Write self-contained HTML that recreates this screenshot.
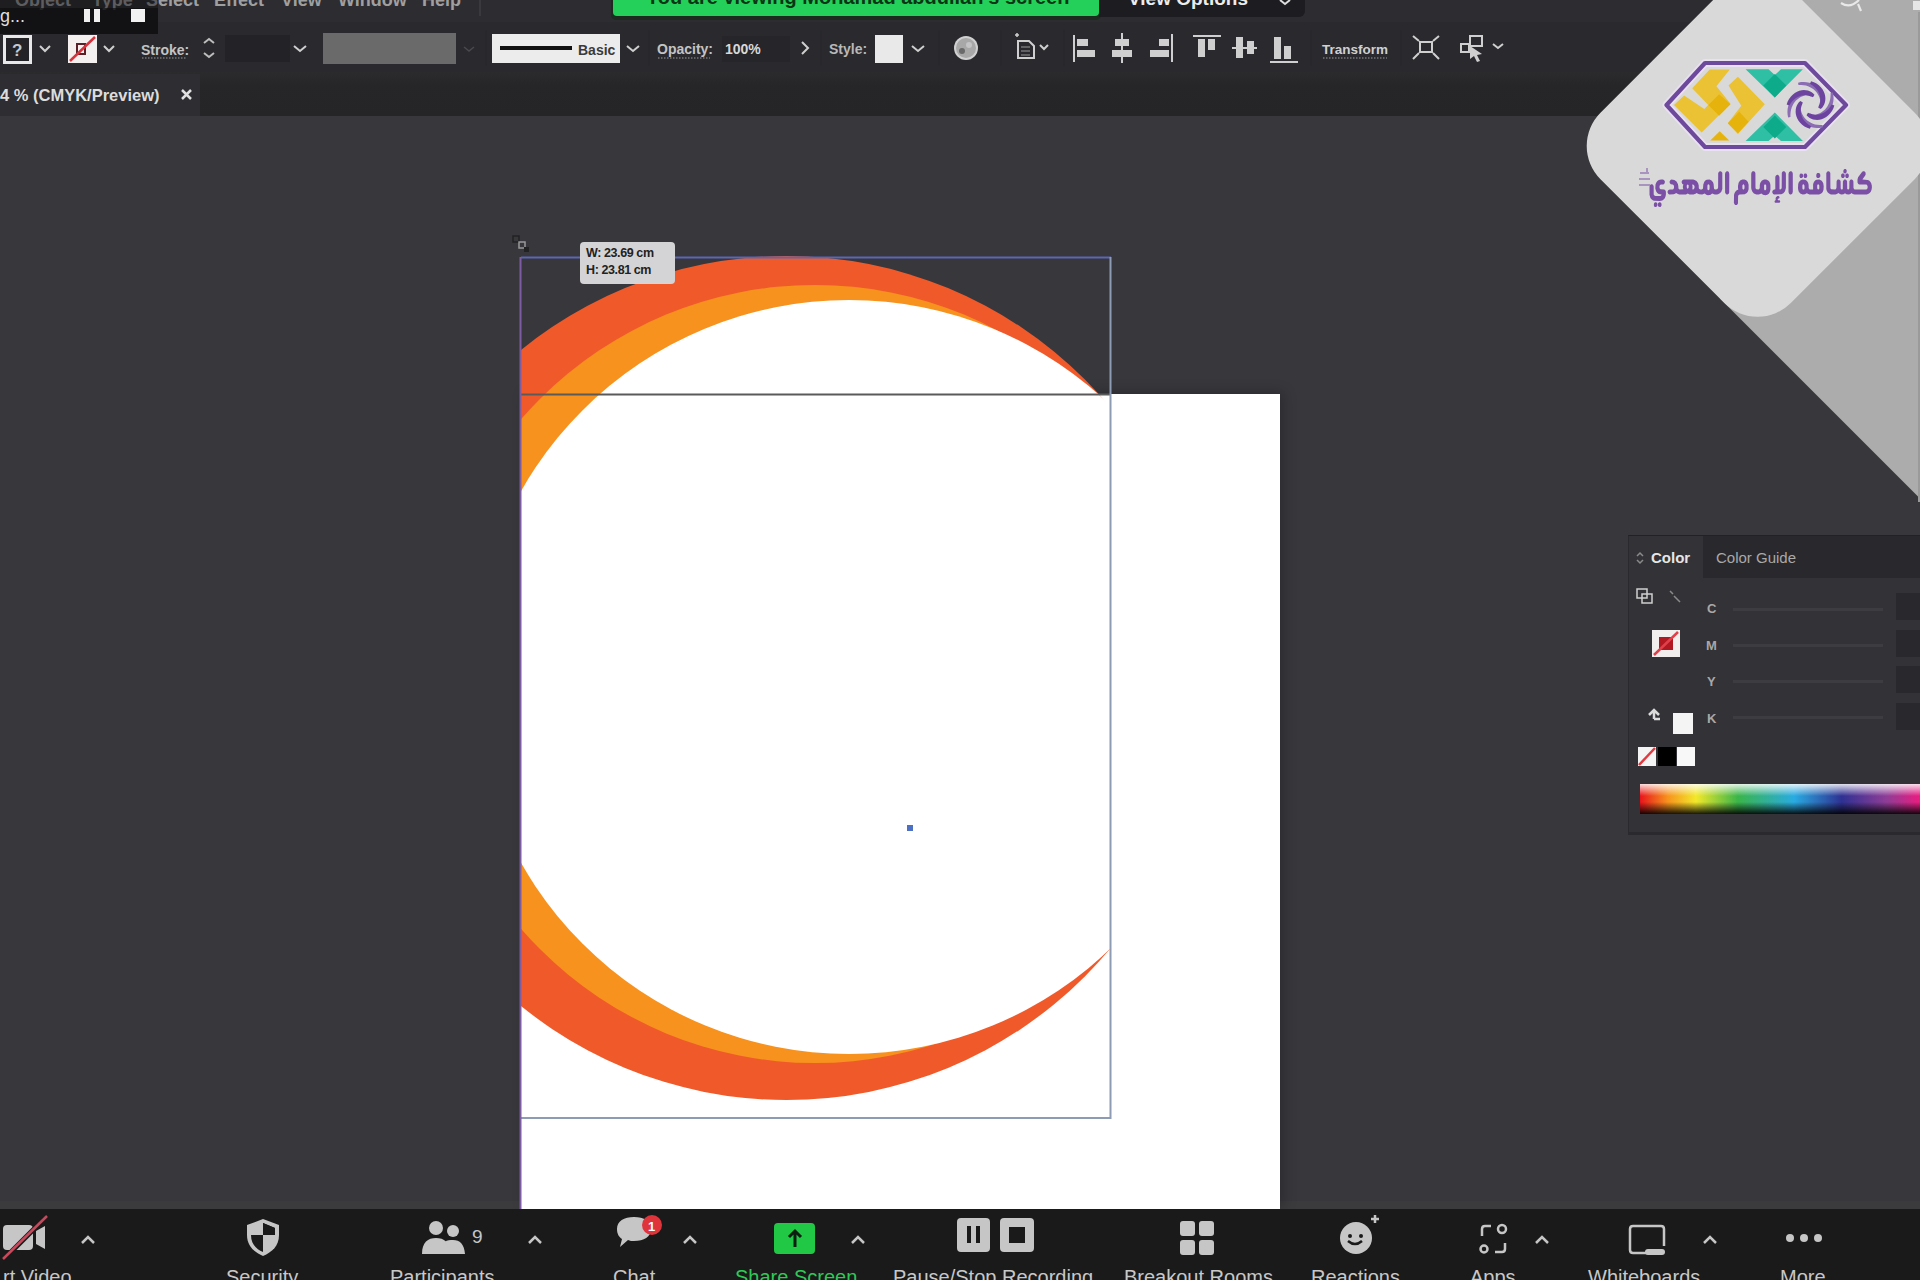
<!DOCTYPE html>
<html><head><meta charset="utf-8">
<style>
*{margin:0;padding:0;box-sizing:border-box}
html,body{width:1920px;height:1280px;overflow:hidden;background:#38373c;font-family:"Liberation Sans",sans-serif}
.a{position:absolute}
#menubar{left:0;top:0;width:1920px;height:22px;background:#2d2c31}
#toolbar{left:0;top:22px;width:1920px;height:50px;background:#2a292e}
#tabrow{left:0;top:72px;width:1920px;height:44px;background:linear-gradient(#2b2a2d,#262528 30%,#252527)}
#tab{left:0;top:74px;width:200px;height:42px;background:#2e2d31}
#canvas{left:0;top:116px;width:1920px;height:1093px;background:#38373c}
#zoombar{left:0;top:1209px;width:1920px;height:71px;background:#1a1a1a}
.menu{color:#b4b4b4;font-size:18px;top:-10px;font-weight:bold;opacity:.85}
.tt{color:#c8c8c8;font-size:14px}
.lbl{color:#c8c8c8;font-size:20px;top:1266px;white-space:nowrap}
</style></head><body>
<div id="menubar" class="a"></div>
<div id="toolbar" class="a"></div>
<div id="tabrow" class="a"></div>
<div id="tab" class="a"></div>
<div id="canvas" class="a"></div>

<!-- menu text (cut at top) -->
<div class="a menu" style="left:15px">Object</div>
<div class="a menu" style="left:92px">Type</div>
<div class="a menu" style="left:146px">Select</div>
<div class="a menu" style="left:214px">Effect</div>
<div class="a menu" style="left:281px">View</div>
<div class="a menu" style="left:338px">Window</div>
<div class="a menu" style="left:422px">Help</div>
<div class="a" style="left:479px;top:0;width:2px;height:16px;background:#3a393d"></div>

<!-- recording overlay -->
<div class="a" style="left:0;top:0;width:158px;height:8px;background:rgba(14,13,15,0.45)"></div><div class="a" style="left:0;top:8px;width:158px;height:26px;background:rgba(14,13,15,0.85)"></div>
<div class="a" style="left:0;top:6px;color:#dedede;font-size:18px">g...</div>
<div class="a" style="left:84px;top:9px;width:6px;height:13px;background:#f0f0f0"></div>
<div class="a" style="left:94px;top:9px;width:6px;height:13px;background:#f0f0f0"></div>
<div class="a" style="left:131px;top:9px;width:14px;height:13px;background:#f2f2f2"></div>

<!-- green banner -->
<div class="a" style="left:611px;top:0;width:490px;height:20px;background:#1c2a20;border-radius:0 0 5px 5px"></div>
<div class="a" style="left:613px;top:0;width:486px;height:16px;background:#25d05a;border-radius:0 0 4px 4px;overflow:hidden">
  <div class="a" style="left:33px;top:-14px;color:#0c3516;font-size:20px;font-weight:bold;white-space:nowrap">You are viewing Mohamad abdullah's screen</div>
</div>
<div class="a" style="left:1099px;top:0;width:206px;height:17px;background:#1d1c20;border-radius:0 0 6px 0;overflow:hidden">
  <div class="a" style="left:29px;top:-12px;color:#ececec;font-size:19px;font-weight:bold;white-space:nowrap">View Options</div>
  <svg class="a" style="left:178px;top:0" width="16" height="10"><path d="M3 0 L8 4 L13 0" stroke="#ddd" stroke-width="2" fill="none"/></svg>
</div>

<!-- toolbar -->
<svg class="a" style="left:0;top:22px" width="1920" height="50">
  <g fill="none" stroke="#cfcfcf" stroke-width="2">
    <!-- fill box -->
    
    <path d="M40 24 l5 5 l5 -5" />
    <path d="M104 24 l5 5 l5 -5" />
    <path d="M204 21 l5 -4 l5 4 M204 31 l5 4 l5 -4" stroke="#bdbdbd"/>
    <path d="M294 24 l6 5 l6 -5" />
    <path d="M627 24 l6 5 l6 -5" />
    <path d="M802 20 l6 6 l-6 6" />
    <path d="M912 24 l6 5 l6 -5" />
    <path d="M1040 23 l4 4 l4 -4" />
    <path d="M1493 22 l5 4 l5 -4" />
  </g>
    <rect x="4.5" y="14.5" width="26" height="26" fill="#232226" stroke="#e8e8e8" stroke-width="3"/><text x="12" y="34" fill="#c8c8c8" font-size="17" font-family="Liberation Sans" font-weight="bold">?</text>
  <!-- stroke box -->
  <rect x="68" y="13" width="29" height="28" fill="#f4f0f0"/>
  <path d="M77 22 h8 v10 h-8 z" fill="none" stroke="#5a2028" stroke-width="2"/>
  <line x1="70" y1="39" x2="95" y2="15" stroke="#d8323c" stroke-width="2.5"/>
  <text x="141" y="33" fill="#c4c4c4" font-size="14" font-family="Liberation Sans" font-weight="bold">Stroke:</text>
  <line x1="142" y1="36" x2="187" y2="36" stroke="#9a9a9a" stroke-width="1" stroke-dasharray="1.5 1.5"/>
  <rect x="225" y="13" width="65" height="27" fill="#232226"/>
  <rect x="323" y="11" width="133" height="31" fill="#6a6a6a"/>
  <rect x="458" y="11" width="22" height="31" fill="#2a292e"/>
  <path d="M464 25 l5 4 l5 -4" stroke="#4a4a4e" stroke-width="1.5" fill="none"/>
  <!-- brush box -->
  <rect x="492" y="12" width="128" height="29" fill="#ececec"/>
  <rect x="500" y="24" width="72" height="4" fill="#111"/>
  <text x="578" y="33" fill="#3a3a3a" font-size="14" font-family="Liberation Sans" font-weight="bold">Basic</text>
  <text x="657" y="32" fill="#c4c4c4" font-size="14" font-family="Liberation Sans" font-weight="bold">Opacity:</text>
  <line x1="658" y1="36" x2="710" y2="36" stroke="#9a9a9a" stroke-width="1" stroke-dasharray="1.5 1.5"/>
  <rect x="722" y="14" width="68" height="26" fill="#262529"/>
  <text x="725" y="32" fill="#d8d8d8" font-size="14" font-family="Liberation Sans" font-weight="bold">100%</text>
  <text x="829" y="32" fill="#b8b8b8" font-size="14" font-family="Liberation Sans" font-weight="bold">Style:</text>
  <rect x="875" y="13" width="28" height="28" fill="#e9e9e9"/>
  <circle cx="966" cy="26" r="12" fill="#d0d0d0"/>
  <circle cx="966" cy="26" r="10" fill="#a8a8a8"/><circle cx="962" cy="29" r="3" fill="#6a6a6a"/><circle cx="969" cy="23" r="3" fill="#c4c4c4"/>
  <!-- doc icon -->
  <g fill="none" stroke="#cfcfcf" stroke-width="2">
    <path d="M1017 15 v-4 M1015 13 h4" stroke-width="1.5"/>
    <path d="M1018 19 h11 l5 5 v12 h-16 z"/>
    <path d="M1021 25 h9 M1021 29 h9 M1021 33 h9" stroke-width="1.2" stroke="#9a9a9a"/>
  </g>
  <!-- align icons -->
  <g fill="#cfcfcf">
    <rect x="1073" y="13" width="2" height="27"/><rect x="1077" y="17" width="11" height="7"/><rect x="1077" y="28" width="18" height="7"/>
    <rect x="1121" y="11" width="2" height="30"/><rect x="1115" y="17" width="14" height="7"/><rect x="1112" y="28" width="20" height="7"/>
    <rect x="1171" y="12" width="2" height="28"/><rect x="1159" y="17" width="10" height="7"/><rect x="1150" y="28" width="19" height="7"/>
    <rect x="1193" y="13" width="28" height="2"/><rect x="1198" y="17" width="7" height="18"/><rect x="1208" y="17" width="7" height="11"/>
    <rect x="1232" y="25" width="25" height="2"/><rect x="1236" y="15" width="7" height="21"/><rect x="1247" y="19" width="7" height="13"/>
    <rect x="1270" y="39" width="28" height="2"/><rect x="1274" y="15" width="7" height="22"/><rect x="1284" y="24" width="7" height="13"/>
  </g>
  <text x="1322" y="32" fill="#d0d0d0" font-size="13.5" font-family="Liberation Sans" font-weight="bold">Transform</text>
  <line x1="1323" y1="36" x2="1387" y2="36" stroke="#9a9a9a" stroke-width="1" stroke-dasharray="1.5 1.5"/>
  <g fill="none" stroke="#cfcfcf" stroke-width="2">
    <rect x="1420" y="20" width="12" height="10"/>
    <path d="M1413 14 l6 5 M1439 14 l-6 5 M1413 37 l6 -6 M1439 37 l-6 -6"/>
    <rect x="1470" y="14" width="12" height="10"/>
    <rect x="1461" y="22" width="8" height="8"/>
  </g>
  <path d="M1470 24 l12 8 l-5 1 l3 6 l-3 1 l-3 -6 l-4 3 z" fill="#cfcfcf"/>
  <!-- separators -->
  <g fill="#28272b">
    <rect x="485" y="8" width="2" height="36"/><rect x="648" y="8" width="2" height="36"/>
    <rect x="820" y="8" width="2" height="36"/><rect x="938" y="8" width="2" height="36"/><rect x="1000" y="8" width="2" height="36"/>
    <rect x="1063" y="8" width="2" height="36"/><rect x="1310" y="8" width="2" height="36"/><rect x="1400" y="8" width="2" height="36"/>
  </g>
</svg>

<!-- tab -->
<div class="a" style="left:0;top:86px;color:#dcdcdc;font-size:16.5px;font-weight:bold;white-space:nowrap">4 % (CMYK/Preview)</div>
<svg class="a" style="left:180px;top:88px" width="14" height="14"><path d="M2 2 L11 11 M11 2 L2 11" stroke="#e0e0e0" stroke-width="2.5"/></svg>

<div class="a" style="left:0;top:1201px;width:1920px;height:8px;background:#3b3a3d"></div>
<!-- artboard -->
<div class="a" style="left:521px;top:394px;width:759px;height:815px;background:#fff;box-shadow:4px -2px 12px rgba(0,0,0,.22)"></div>

<!-- artwork -->
<svg class="a" style="left:0;top:0" width="1920" height="1280">
  <defs><clipPath id="cl"><rect x="521" y="200" width="590" height="1000"/></clipPath></defs>
  <g clip-path="url(#cl)">
    <circle cx="786.5" cy="678" r="422" fill="#f05a2a"/>
    <circle cx="815" cy="674" r="389" fill="#f7921e"/>
    <circle cx="849" cy="677" r="377" fill="#ffffff"/>
  </g>
  <line x1="521" y1="394.5" x2="1110" y2="394.5" stroke="#5a5a5a" stroke-width="2"/>
  <line x1="521" y1="257.5" x2="1111" y2="257.5" stroke="#5b66b4" stroke-width="2"/>
  <line x1="1110.5" y1="257" x2="1110.5" y2="1119" stroke="#8d9bb5" stroke-width="2"/>
  <line x1="521" y1="1118" x2="1111" y2="1118" stroke="#8d9bb5" stroke-width="2"/>
  <line x1="520.5" y1="257" x2="520.5" y2="1209" stroke="#7d5ca3" stroke-width="2"/>
  <rect x="907" y="825" width="6" height="6" fill="#4d6fc4"/>
</svg>

<!-- tooltip -->
<div class="a" style="left:580px;top:242px;width:95px;height:42px;background:#d4d4d6;border-radius:4px"></div>
<div class="a" style="left:586px;top:245px;color:#222;font-size:12.5px;font-weight:bold;line-height:17px;white-space:nowrap;letter-spacing:-0.4px">W: 23.69 cm<br>H: 23.81 cm</div>
<svg class="a" style="left:508px;top:232px" width="30" height="30">
  <rect x="5" y="4" width="6" height="6" fill="none" stroke="#222" stroke-width="1.5"/>
  <rect x="11" y="10" width="6" height="6" fill="none" stroke="#999" stroke-width="1.5"/>
  <rect x="16" y="15" width="5" height="5" fill="#222"/>
</svg>

<!-- color panel -->
<div class="a" style="left:1628px;top:535px;width:292px;height:300px;background:#333237;border-top:1px solid #222126;border-left:1px solid #2a292d;border-bottom:3px solid #2a292d"></div>
<div class="a" style="left:1703px;top:536px;width:217px;height:42px;background:#29282c"></div>
<svg class="a" style="left:1636px;top:551px" width="8" height="14"><path d="M1 5 l3 -3 l3 3 M1 9 l3 3 l3 -3" stroke="#8a8a8a" stroke-width="1.5" fill="none"/></svg>
<div class="a" style="left:1651px;top:549px;color:#e6e6e6;font-size:15px;font-weight:bold">Color</div>
<div class="a" style="left:1716px;top:549px;color:#a9a9a9;font-size:15px">Color Guide</div>
<svg class="a" style="left:1628px;top:578px" width="292" height="257">
  <g fill="none" stroke="#cfcfcf" stroke-width="1.5">
    <rect x="9" y="11" width="10" height="9"/><rect x="14" y="16" width="10" height="9"/>
    <path d="M42 13 l3 3 M46 18 l6 6" stroke="#8a8a8a"/>
  </g>
  <rect x="24" y="52" width="28" height="27" fill="#f2eeee"/>
  <rect x="31" y="59" width="14" height="13" fill="#b01822"/>
  <line x1="26" y1="77" x2="50" y2="54" stroke="#e0404a" stroke-width="2.5"/>
  <g fill="#a8a8a8" font-family="Liberation Sans" font-size="13" font-weight="bold">
    <text x="79" y="35">C</text><text x="78" y="72">M</text><text x="79" y="108">Y</text><text x="79" y="145">K</text>
  </g>
  <g fill="#3d3c41">
    <rect x="105" y="30" width="150" height="3"/><rect x="105" y="66" width="150" height="3"/>
    <rect x="105" y="102" width="150" height="3"/><rect x="105" y="138" width="150" height="3"/>
  </g>
  <g fill="#29282c">
    <rect x="268" y="15" width="24" height="27"/><rect x="268" y="52" width="24" height="27"/>
    <rect x="268" y="88" width="24" height="27"/><rect x="268" y="125" width="24" height="27"/>
  </g>
  <path d="M26 141 v-9 M21 137 l5 -5 l5 5 M26 141 h6" stroke="#dcdcdc" stroke-width="2.5" fill="none"/>
  <rect x="45" y="135" width="20" height="21" fill="#f4f4f4"/>
  <rect x="10" y="169" width="18" height="19" fill="#f4f4f4"/>
  <line x1="11" y1="187" x2="27" y2="170" stroke="#e03a40" stroke-width="2.5"/>
  <rect x="30" y="169" width="18" height="19" fill="#000"/>
  <rect x="49" y="169" width="18" height="19" fill="#f8f8f8"/>
  <defs>
    <linearGradient id="spec" x1="0" x2="1" y1="0" y2="0">
      <stop offset="0" stop-color="#e8141c"/><stop offset="0.1" stop-color="#f7941d"/><stop offset="0.2" stop-color="#f2e82a"/>
      <stop offset="0.35" stop-color="#3ab54a"/><stop offset="0.55" stop-color="#29abe2"/><stop offset="0.72" stop-color="#2e3192"/>
      <stop offset="0.88" stop-color="#8e3d97"/><stop offset="1" stop-color="#ec1c80"/>
    </linearGradient>
    <linearGradient id="specv" x1="0" x2="0" y1="0" y2="1">
      <stop offset="0" stop-color="#fff" stop-opacity="0.85"/><stop offset="0.4" stop-color="#fff" stop-opacity="0"/>
      <stop offset="0.6" stop-color="#000" stop-opacity="0"/><stop offset="1" stop-color="#000" stop-opacity="0.9"/>
    </linearGradient>
  </defs>
  <rect x="12" y="206" width="280" height="30" fill="url(#spec)"/>
  <rect x="12" y="206" width="280" height="30" fill="url(#specv)"/>
</svg>

<!-- logo overlay -->
<svg class="a" style="left:0;top:0" width="1920" height="1280">
  <polygon points="1713,0 1920,0 1920,498.5 1720,298.5 1757.6,146" fill="#acacac"/>
  <path d="M1841 3 q9 6 18 -3 M1858 4 l3 7" stroke="#e8e8e8" stroke-width="2.2" fill="none"/>
  <rect x="1913" y="1" width="7" height="9" fill="#e6e6e6"/><rect x="1918" y="12" width="2" height="490" fill="#9a9a9a"/>
  <g transform="translate(1757.6 145.9) rotate(45)">
    <rect x="-134.6" y="-134.6" width="269.2" height="269.2" rx="47" fill="#d9d9d9"/>
  </g>
</svg>

<!-- logo -->
<svg class="a" style="left:0;top:0" width="1920" height="300">
  <polygon points="1666.5,105 1705,63 1805,63 1846,105 1805,147 1705,147" fill="none" stroke="#e9e0f0" stroke-width="8" stroke-linejoin="round"/>
  <polygon points="1666.5,105 1705,63 1805,63 1846,105 1805,147 1705,147" fill="none" stroke="#6d4a9c" stroke-width="4.2" stroke-linejoin="round"/>
  <g fill="#ebc233">
    <polygon points="1709.7,69.4 1729.8,69.4 1716.4,86.2 1730.5,103.7 1701.6,132.6 1674.0,105.0 1684.1,95.6 1704.3,109.0 1708.3,105.0 1692.2,88.2"/>
    <polygon points="1728.5,85.5 1737.9,76.8 1764.8,104.3 1737.9,133.9 1727.8,123.2 1741.3,105.7"/>
  </g>
  <g fill="#e6b30c">
    <polygon points="1708.3,105.0 1719.1,94.3 1730.5,104.3 1719.1,115.8"/>
    <polygon points="1727.8,123.2 1739.2,111.7 1748.6,121.8 1737.9,133.2"/>
    <polygon points="1710.3,140.6 1719.7,131.2 1729.2,140.6"/>
  </g>
  <g fill="#2ebfa4">
    <polygon points="1745.6,69.3 1768.5,69.3 1774.8,75.0 1781.0,69.3 1802.9,69.3 1774.8,97.4"/>
    <polygon points="1745.6,141.1 1768.5,141.1 1774.8,135.4 1781.0,141.1 1802.9,141.1 1774.8,112.5"/>
  </g>
  <g fill="#0eab8b">
    <polygon points="1763.3,85.4 1774.8,74.0 1786.3,85.4 1774.8,97.4"/>
    <polygon points="1763.3,127.1 1774.8,115.6 1786.3,127.1 1774.8,138.5"/>
  </g>
  <path d="M1798.08 109.35 L1798.03 110.66 L1798.09 112.21 L1798.34 113.88 L1798.80 115.63 L1799.50 117.42 L1800.47 119.19 L1801.70 120.92 L1803.20 122.56 L1804.97 124.06 L1807.00 125.38 L1809.26 126.48 L1811.73 127.32 L1814.37 127.86 L1817.15 128.07 L1820.02 127.92 L1822.93 127.37 L1822.57 125.06 L1819.90 125.09 L1817.39 124.86 L1815.04 124.39 L1812.86 123.72 L1810.88 122.87 L1809.10 121.86 L1807.51 120.74 L1806.12 119.53 L1804.91 118.26 L1803.89 116.94 L1803.03 115.60 L1802.32 114.25 L1801.73 112.91 L1801.25 111.58 L1800.83 110.26 L1800.37 108.86ZM1814.85 117.42 L1816.16 117.47 L1817.71 117.41 L1819.38 117.16 L1821.13 116.70 L1822.92 116.00 L1824.69 115.03 L1826.42 113.80 L1828.06 112.30 L1829.56 110.53 L1830.88 108.50 L1831.98 106.24 L1832.82 103.77 L1833.36 101.13 L1833.57 98.35 L1833.42 95.48 L1832.87 92.57 L1830.56 92.93 L1830.59 95.60 L1830.36 98.11 L1829.89 100.46 L1829.22 102.64 L1828.37 104.62 L1827.36 106.40 L1826.24 107.99 L1825.03 109.38 L1823.76 110.59 L1822.44 111.61 L1821.10 112.47 L1819.75 113.18 L1818.41 113.77 L1817.08 114.25 L1815.76 114.67 L1814.36 115.13ZM1822.92 100.65 L1822.97 99.34 L1822.91 97.79 L1822.66 96.12 L1822.20 94.37 L1821.50 92.58 L1820.53 90.81 L1819.30 89.08 L1817.80 87.44 L1816.03 85.94 L1814.00 84.62 L1811.74 83.52 L1809.27 82.68 L1806.63 82.14 L1803.85 81.93 L1800.98 82.08 L1798.07 82.63 L1798.43 84.94 L1801.10 84.91 L1803.61 85.14 L1805.96 85.61 L1808.14 86.28 L1810.12 87.13 L1811.90 88.14 L1813.49 89.26 L1814.88 90.47 L1816.09 91.74 L1817.11 93.06 L1817.97 94.40 L1818.68 95.75 L1819.27 97.09 L1819.75 98.42 L1820.17 99.74 L1820.63 101.14ZM1806.15 92.58 L1804.84 92.53 L1803.29 92.59 L1801.62 92.84 L1799.87 93.30 L1798.08 94.00 L1796.31 94.97 L1794.58 96.20 L1792.94 97.70 L1791.44 99.47 L1790.12 101.50 L1789.02 103.76 L1788.18 106.23 L1787.64 108.87 L1787.43 111.65 L1787.58 114.52 L1788.13 117.43 L1790.44 117.07 L1790.41 114.40 L1790.64 111.89 L1791.11 109.54 L1791.78 107.36 L1792.63 105.38 L1793.64 103.60 L1794.76 102.01 L1795.97 100.62 L1797.24 99.41 L1798.56 98.39 L1799.90 97.53 L1801.25 96.82 L1802.59 96.23 L1803.92 95.75 L1805.24 95.33 L1806.64 94.87Z" fill="#8b6db4"/><path d="M1800.32 101.04 L1799.46 101.77 L1798.48 102.85 L1797.55 104.19 L1796.74 105.76 L1796.12 107.55 L1795.74 109.53 L1795.62 111.66 L1795.83 113.89 L1796.37 116.18 L1797.27 118.48 L1798.53 120.71 L1800.16 122.83 L1802.15 124.76 L1804.47 126.45 L1807.09 127.83 L1809.96 128.84 L1811.04 126.16 L1808.78 124.76 L1806.82 123.24 L1805.17 121.60 L1803.80 119.89 L1802.72 118.15 L1801.90 116.42 L1801.32 114.71 L1800.96 113.06 L1800.79 111.49 L1800.79 109.99 L1800.92 108.59 L1801.17 107.28 L1801.50 106.05 L1801.90 104.89 L1802.35 103.75 L1802.83 102.46ZM1806.54 115.18 L1807.27 116.04 L1808.35 117.02 L1809.69 117.95 L1811.26 118.76 L1813.05 119.38 L1815.03 119.76 L1817.16 119.88 L1819.39 119.67 L1821.68 119.13 L1823.98 118.23 L1826.21 116.97 L1828.33 115.34 L1830.26 113.35 L1831.95 111.03 L1833.33 108.41 L1834.34 105.54 L1831.66 104.46 L1830.26 106.72 L1828.74 108.68 L1827.10 110.33 L1825.39 111.70 L1823.65 112.78 L1821.92 113.60 L1820.21 114.18 L1818.56 114.54 L1816.99 114.71 L1815.49 114.71 L1814.09 114.58 L1812.78 114.33 L1811.55 114.00 L1810.39 113.60 L1809.25 113.15 L1807.96 112.67ZM1820.68 108.96 L1821.54 108.23 L1822.52 107.15 L1823.45 105.81 L1824.26 104.24 L1824.88 102.45 L1825.26 100.47 L1825.38 98.34 L1825.17 96.11 L1824.63 93.82 L1823.73 91.52 L1822.47 89.29 L1820.84 87.17 L1818.85 85.24 L1816.53 83.55 L1813.91 82.17 L1811.04 81.16 L1809.96 83.84 L1812.22 85.24 L1814.18 86.76 L1815.83 88.40 L1817.20 90.11 L1818.28 91.85 L1819.10 93.58 L1819.68 95.29 L1820.04 96.94 L1820.21 98.51 L1820.21 100.01 L1820.08 101.41 L1819.83 102.72 L1819.50 103.95 L1819.10 105.11 L1818.65 106.25 L1818.17 107.54ZM1814.46 94.82 L1813.73 93.96 L1812.65 92.98 L1811.31 92.05 L1809.74 91.24 L1807.95 90.62 L1805.97 90.24 L1803.84 90.12 L1801.61 90.33 L1799.32 90.87 L1797.02 91.77 L1794.79 93.03 L1792.67 94.66 L1790.74 96.65 L1789.05 98.97 L1787.67 101.59 L1786.66 104.46 L1789.34 105.54 L1790.74 103.28 L1792.26 101.32 L1793.90 99.67 L1795.61 98.30 L1797.35 97.22 L1799.08 96.40 L1800.79 95.82 L1802.44 95.46 L1804.01 95.29 L1805.51 95.29 L1806.91 95.42 L1808.22 95.67 L1809.45 96.00 L1810.61 96.40 L1811.75 96.85 L1813.04 97.33Z" fill="#6c44a0"/>
  <path d="M1659.2 202.3 1658.1 203.3 1657.9 203.8 1657.9 205.5 1658.6 206.7 1660.3 207.0 1660.8 206.7 1661.5 205.5 1661.5 203.8 1660.7 202.5ZM1655.2 202.3 1654.5 202.7 1654.0 203.4 1653.8 205.3 1654.3 206.5 1654.7 206.9 1656.2 207.0 1657.1 206.1 1657.4 205.3 1657.4 204.0 1657.0 203.0 1656.5 202.5ZM1779.0 196.2 1778.4 196.0 1777.4 196.1 1776.0 197.2 1775.6 198.3 1775.7 200.1 1774.6 200.9 1774.6 201.9 1774.9 202.4 1775.4 202.7 1779.3 202.7 1780.0 202.2 1780.2 201.4 1779.9 200.6 1779.3 200.2 1778.1 200.2 1777.7 199.7 1777.9 198.7 1778.9 198.5 1779.4 198.0 1779.5 197.0ZM1664.2 180.2 1663.0 179.6 1661.1 179.6 1658.8 180.1 1657.4 181.1 1656.3 182.4 1655.5 184.4 1655.3 188.4 1656.2 191.4 1657.3 192.9 1658.7 193.9 1661.5 194.4 1661.5 195.0 1660.5 195.9 1655.4 196.0 1654.4 195.6 1653.9 195.0 1653.7 194.3 1653.7 186.5 1653.5 185.8 1652.9 184.8 1652.1 184.3 1651.1 184.3 1650.1 185.0 1649.5 186.5 1649.5 194.8 1650.4 197.9 1651.5 199.3 1653.1 200.4 1654.4 200.8 1659.7 200.9 1662.3 200.4 1663.9 199.3 1664.6 198.5 1665.5 196.6 1665.9 194.6 1665.9 191.8 1665.6 190.8 1665.2 190.2 1664.3 189.6 1660.5 189.3 1659.8 188.6 1659.5 188.0 1659.5 186.1 1660.1 185.0 1661.0 184.5 1663.4 184.4 1664.7 183.3 1664.9 181.5ZM1798.2 184.0 1798.0 188.0 1798.2 189.8 1798.7 191.4 1800.2 193.4 1802.7 194.5 1805.0 194.3 1806.7 193.2 1809.5 194.4 1819.0 194.4 1820.7 193.8 1821.9 192.9 1822.8 191.7 1823.5 189.7 1823.7 186.3 1823.2 183.1 1821.7 180.7 1819.3 179.5 1816.5 179.7 1815.4 180.3 1814.1 181.7 1813.4 183.2 1813.1 184.5 1813.1 189.5 1810.0 189.5 1809.4 189.2 1808.7 187.9 1808.6 184.7 1808.1 182.7 1807.0 181.0 1805.2 179.7 1802.4 179.5 1800.6 180.2 1798.9 182.1ZM1818.0 184.3 1818.7 184.4 1819.3 185.4 1819.3 188.5 1818.7 189.5 1817.7 189.3 1817.2 188.2 1817.2 185.6 1817.5 184.8ZM1803.2 184.3 1803.9 184.4 1804.5 185.8 1804.5 188.2 1804.2 189.2 1803.8 189.6 1802.9 189.5 1802.4 188.6 1802.4 185.4 1802.6 184.8ZM1746.3 180.3 1744.4 179.5 1742.4 179.5 1740.1 180.6 1738.6 182.7 1738.0 185.9 1738.0 187.9 1738.3 189.6 1736.4 190.5 1735.1 191.9 1734.4 193.4 1734.0 195.0 1733.9 202.9 1734.4 204.1 1735.1 204.9 1735.8 205.1 1736.9 204.9 1737.7 204.0 1738.0 203.3 1738.1 196.1 1738.6 194.9 1739.6 194.4 1744.7 194.3 1746.8 193.0 1747.9 191.6 1748.6 189.2 1748.6 184.7 1747.8 182.1ZM1743.2 184.3 1743.9 184.4 1744.5 185.8 1744.5 188.1 1744.2 189.1 1743.8 189.5 1743.0 189.5 1742.4 188.5 1742.4 185.4ZM1846.6 173.4 1845.5 174.4 1845.3 174.9 1845.3 176.6 1846.0 177.9 1847.6 178.1 1848.2 177.8 1848.8 176.6 1848.8 175.0 1848.5 174.3 1847.8 173.6ZM1842.2 173.6 1841.4 174.3 1841.1 175.0 1841.2 176.9 1842.1 178.0 1843.6 178.1 1844.7 176.8 1844.7 174.8 1843.7 173.6ZM1805.0 173.4 1804.3 173.8 1803.7 174.8 1803.6 176.4 1804.4 177.9 1806.0 178.1 1806.7 177.6 1807.2 176.6 1807.2 175.0 1806.5 173.8 1805.8 173.4ZM1800.8 173.4 1800.3 173.7 1799.6 174.7 1799.5 176.6 1800.2 177.9 1802.0 178.1 1803.1 176.8 1803.1 174.8 1802.3 173.7ZM1817.7 172.9 1817.0 173.3 1816.4 174.2 1816.2 176.3 1816.7 177.4 1817.4 178.0 1818.8 178.1 1819.6 177.6 1820.3 176.4 1820.3 174.7 1819.5 173.3 1818.8 172.9ZM1826.3 172.9 1826.3 189.0 1826.7 190.5 1827.6 192.2 1828.7 193.3 1830.3 194.2 1831.4 194.4 1835.4 194.4 1836.8 194.0 1838.5 193.0 1839.8 194.0 1841.3 194.4 1843.5 194.2 1845.0 193.2 1846.5 194.2 1848.8 194.4 1850.4 193.9 1851.5 193.0 1852.8 193.9 1854.6 194.4 1866.7 194.4 1868.6 193.8 1869.9 192.8 1870.9 191.4 1871.6 189.6 1871.9 187.4 1871.8 185.4 1871.2 183.2 1870.3 181.7 1869.1 180.6 1867.6 179.9 1862.4 179.5 1865.2 175.5 1865.7 174.3 1865.5 172.5 1865.0 171.7 1864.2 171.2 1863.2 171.2 1862.2 171.8 1858.1 177.3 1857.5 179.4 1857.5 182.4 1858.3 184.0 1859.3 184.5 1866.3 184.5 1866.8 184.8 1867.6 186.0 1867.6 188.0 1867.4 188.6 1866.4 189.5 1854.8 189.5 1854.2 189.2 1853.5 188.0 1853.4 181.5 1853.1 180.6 1851.9 179.5 1850.8 179.5 1850.2 179.9 1849.4 181.2 1849.3 188.1 1849.1 189.0 1848.5 189.5 1847.9 189.5 1847.2 188.7 1847.1 181.6 1846.7 180.5 1845.6 179.5 1844.2 179.6 1843.1 181.0 1842.9 181.8 1842.8 188.9 1842.2 189.5 1841.4 189.5 1840.7 188.6 1840.6 181.5 1840.3 180.6 1839.1 179.5 1837.7 179.6 1836.9 180.5 1836.6 181.2 1836.5 187.6 1836.2 188.6 1835.7 189.2 1835.1 189.5 1831.4 189.3 1830.8 188.9 1830.4 187.7 1830.3 172.9 1829.6 171.7 1828.8 171.2 1827.3 171.5ZM1790.2 171.2 1789.0 172.2 1788.5 174.1 1788.5 191.6 1788.7 192.8 1789.3 193.9 1790.3 194.5 1791.0 194.5 1792.2 193.7 1792.8 191.8 1792.8 173.8 1792.5 172.6 1791.8 171.6 1791.1 171.2ZM1784.3 171.2 1783.0 171.3 1782.1 172.3 1781.8 173.1 1781.7 187.7 1781.5 188.5 1780.8 189.2 1780.2 189.5 1779.5 189.3 1779.5 177.4 1779.3 176.4 1778.5 175.2 1777.8 174.8 1776.6 174.9 1775.6 176.0 1775.3 177.0 1775.3 189.3 1773.6 189.7 1772.4 190.9 1772.3 192.6 1773.1 193.9 1774.2 194.4 1781.3 194.3 1783.4 193.3 1785.0 191.3 1785.9 188.1 1785.9 173.4 1785.3 172.0ZM1752.2 171.6 1751.6 172.3 1751.2 173.9 1751.2 187.4 1751.4 189.2 1752.4 191.8 1753.9 193.4 1756.4 194.4 1758.8 194.4 1761.4 193.4 1763.0 194.8 1764.0 195.1 1765.7 195.3 1767.3 194.8 1768.8 193.7 1769.7 192.3 1770.4 189.7 1770.4 184.9 1770.0 183.1 1769.4 181.8 1768.2 180.5 1766.2 179.5 1764.2 179.5 1762.9 180.0 1761.7 180.8 1760.2 183.1 1759.8 184.9 1759.8 187.4 1759.5 188.6 1759.0 189.2 1758.4 189.5 1756.4 189.3 1755.7 188.6 1755.5 188.0 1755.4 173.2 1755.1 172.3 1754.1 171.3 1752.9 171.2ZM1764.9 184.3 1765.6 184.4 1766.2 185.5 1766.2 189.2 1765.5 190.3 1764.6 190.2 1764.1 189.2 1764.1 185.5 1764.3 184.9ZM1726.7 171.2 1725.5 172.2 1725.0 173.9 1725.1 192.6 1725.9 194.0 1726.8 194.5 1727.5 194.5 1728.7 193.7 1729.2 192.6 1729.3 173.9 1729.0 172.6 1728.3 171.6 1727.6 171.2ZM1722.3 173.1 1722.0 172.3 1720.8 171.2 1719.2 171.5 1718.2 172.9 1718.1 187.5 1717.8 188.6 1717.1 189.3 1715.1 189.5 1714.5 189.2 1714.0 188.6 1713.6 184.0 1713.0 182.3 1711.5 180.5 1709.5 179.5 1706.7 179.7 1705.6 180.3 1704.3 181.7 1703.3 184.4 1703.0 188.5 1701.9 189.5 1700.2 189.5 1699.1 188.7 1698.8 187.9 1698.7 185.2 1698.0 182.9 1696.5 181.0 1694.6 179.9 1693.3 179.6 1683.6 179.6 1682.4 180.2 1681.8 181.1 1681.7 182.8 1682.4 183.9 1683.4 184.5 1682.9 186.3 1682.9 187.9 1683.4 189.3 1679.6 189.5 1678.9 189.1 1678.4 188.2 1678.3 186.0 1677.9 183.9 1676.5 181.5 1674.4 180.0 1671.5 179.6 1670.5 180.1 1669.8 181.0 1669.6 181.7 1669.7 182.9 1670.8 184.3 1672.7 184.5 1673.5 185.0 1674.0 185.9 1674.0 188.1 1673.3 189.2 1672.8 189.5 1669.8 189.5 1668.5 190.0 1667.7 190.9 1667.6 192.6 1668.4 193.9 1669.4 194.4 1673.7 194.3 1675.0 193.8 1676.1 192.9 1677.9 194.0 1679.4 194.4 1685.8 194.4 1687.0 194.0 1687.6 193.5 1689.6 194.4 1693.4 194.4 1695.5 193.8 1696.7 192.9 1697.9 193.8 1699.2 194.3 1702.2 194.4 1704.7 193.4 1706.3 194.8 1707.9 195.3 1709.6 195.1 1710.6 194.8 1712.2 193.4 1714.7 194.4 1717.1 194.4 1718.5 194.0 1719.8 193.3 1721.3 191.7 1722.3 188.9ZM1692.1 184.5 1693.6 184.7 1694.5 185.9 1694.5 188.1 1693.4 189.5 1692.2 189.3 1692.5 188.2 1692.5 186.1ZM1687.5 184.5 1688.1 184.7 1688.7 185.6 1688.6 187.5 1687.9 188.7 1687.5 188.7 1687.0 188.1 1686.7 187.0 1686.8 185.3ZM1708.3 184.3 1708.9 184.4 1709.4 185.0 1709.6 186.4 1709.5 189.3 1708.8 190.3 1707.8 190.1 1707.4 189.0 1707.4 185.8 1707.7 184.8ZM1844.5 169.0 1843.5 170.0 1843.3 171.8 1843.6 172.7 1844.2 173.3 1845.6 173.4 1846.6 172.3 1846.7 170.5 1846.5 169.9 1845.8 169.1Z" fill="#7a4fa5" fill-rule="evenodd"/>
  <g fill="#9d84b8" opacity="0.8">
    <rect x="1640" y="172" width="9" height="2"/><rect x="1639" y="178" width="11" height="2"/><rect x="1639" y="184" width="11" height="2"/>
    <rect x="1646" y="168" width="2" height="4"/>
  </g>
</svg>

<div id="zoombar" class="a"></div>
<svg class="a" style="left:0;top:1209px" width="1920" height="71">
  <g fill="#c6c6c6">
    <!-- video -->
    <rect x="3" y="16" width="30" height="25" rx="4"/>
    <path d="M36 22 l9 -5 v23 l-9 -5 z"/>
    <!-- security shield -->
    <path d="M263 10 l16 6 v10 c0 11 -7 17 -16 21 c-9 -4 -16 -10 -16 -21 v-10 z"/>
    <!-- participants -->
    <circle cx="436" cy="19" r="7"/><path d="M422 45 c0 -12 6 -16 14 -16 c8 0 14 4 14 16 z"/>
    <circle cx="453" cy="22" r="6"/><path d="M448 45 c0 -6 -1 -10 -3 -12 c2 -2 5 -2 8 -2 c7 0 11 4 12 14 z"/>
    <!-- chat -->
    <path d="M617 20 c0 -8 7 -12 17 -12 c10 0 17 4 17 12 c0 8 -7 12 -17 12 c-2 0 -4 0 -6 -1 l-8 7 l2 -8 c-3 -2 -5 -5 -5 -10 z"/>
    <!-- pause / stop -->
    <rect x="957" y="9" width="33" height="34" rx="4"/>
    <rect x="1000" y="9" width="34" height="34" rx="4"/>
    <!-- breakout -->
    <rect x="1180" y="12" width="15" height="15" rx="3"/><rect x="1199" y="12" width="15" height="15" rx="3"/>
    <rect x="1180" y="31" width="15" height="15" rx="3"/><rect x="1199" y="31" width="15" height="15" rx="3"/>
    <!-- reactions -->
    <circle cx="1356" cy="29" r="16"/>
    <!-- more -->
    <circle cx="1790" cy="29" r="4"/><circle cx="1804" cy="29" r="4"/><circle cx="1818" cy="29" r="4"/>
  </g>
  <path d="M4 50 L47 7" stroke="#1a1a1a" stroke-width="5"/>
  <path d="M3 50 L47 7" stroke="#c8485c" stroke-width="2.5"/>
  <path d="M263 14 v29 c-7 -3 -12 -8 -12 -17 h12 z M263 26 h12 c0 -0 0 0 0 0 v-7 l-12 -5 z" fill="#1a1a1a"/>
  <path d="M263 26 h12 c0 9 -5 14 -12 17 z" fill="#c6c6c6"/>
  <path d="M263 14 l12 5 v7 h-12 z" fill="#1a1a1a"/>
  <text x="472" y="34" fill="#c6c6c6" font-size="19" font-family="Liberation Sans">9</text>
  <circle cx="652" cy="16" r="10" fill="#e0343b"/>
  <text x="648" y="22" fill="#fff" font-size="13" font-weight="bold" font-family="Liberation Sans">1</text>
  <rect x="774" y="14" width="41" height="31" rx="4" fill="#20c845"/>
  <path d="M795 38 v-15 M789 28 l6 -6 l6 6" stroke="#0d1f10" stroke-width="3" fill="none"/>
  <g fill="#1a1a1a">
    <rect x="967" y="17" width="4" height="17"/><rect x="976" y="17" width="4" height="17"/>
    <rect x="1009" y="18" width="16" height="16"/>
  </g>
  <rect x="1012" y="21" width="10" height="10" fill="#c6c6c6" opacity="0"/>
  <g fill="#1a1a1a"><circle cx="1350" cy="27" r="2"/><circle cx="1361" cy="27" r="2"/></g>
  <path d="M1348 32 q7 6 14 0" stroke="#1a1a1a" stroke-width="2.5" fill="none"/>
  <path d="M1371 10 h8 M1375 6 v8" stroke="#c6c6c6" stroke-width="2.5"/>
  <circle cx="1371" cy="14" r="5" fill="#1a1a1a" opacity="0"/>
  <g fill="none" stroke="#c6c6c6" stroke-width="2.5">
    <!-- apps -->
    <path d="M1482 27 v-7 q0 -3 3 -3 h6 M1505 34 v6 q0 3 -3 3 h-7"/>
    <circle cx="1502" cy="20" r="4"/><circle cx="1484" cy="40" r="3.5"/>
    <!-- whiteboard -->
    <path d="M1650 44 h-17 q-3 0 -3 -3 v-21 q0 -3 3 -3 h28 q3 0 3 3 v17"/>
    <!-- carets -->
    <path d="M82 34 l6 -6 l6 6 M529 34 l6 -6 l6 6 M684 34 l6 -6 l6 6 M852 34 l6 -6 l6 6 M1536 34 l6 -6 l6 6 M1704 34 l6 -6 l6 6"/>
  </g>
  <rect x="1645" y="40" width="20" height="6" rx="3" fill="#c6c6c6"/>
</svg>
<div class="a lbl" style="left:3px">rt Video</div>
<div class="a lbl" style="left:226px">Security</div>
<div class="a lbl" style="left:390px">Participants</div>
<div class="a lbl" style="left:613px">Chat</div>
<div class="a lbl" style="left:735px;color:#2fc957">Share Screen</div>
<div class="a lbl" style="left:893px">Pause/Stop Recording</div>
<div class="a lbl" style="left:1124px">Breakout Rooms</div>
<div class="a lbl" style="left:1311px">Reactions</div>
<div class="a lbl" style="left:1470px">Apps</div>
<div class="a lbl" style="left:1588px">Whiteboards</div>
<div class="a lbl" style="left:1780px">More</div>
</body></html>
